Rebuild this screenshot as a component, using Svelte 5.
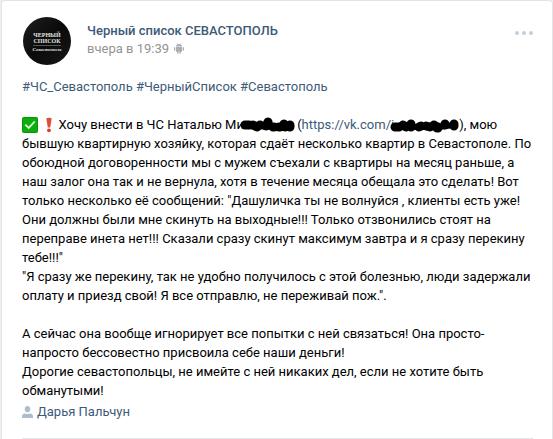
<script>
	const author = 'Дарья Пальчун';
	const tags = ['#ЧС_Севастополь', '#ЧерныйСписок', '#Севастополь'];
</script>

<article class="post">
	<header class="header">
		<a class="avatar" href="#group" aria-label="Черный список">
			<svg width="50" height="50" viewBox="0 0 50 50">
				<defs>
					<linearGradient id="dark" x1="0" y1="0" x2="1" y2="1">
						<stop offset="0" stop-color="#202020" />
						<stop offset="0.5" stop-color="#0a0a0a" />
						<stop offset="1" stop-color="#181818" />
					</linearGradient>
				</defs>
				<circle cx="25" cy="25" r="24" fill="url(#dark)" />
				<g fill="#e4e4e4" text-anchor="middle" font-family="Liberation Serif, serif" font-weight="bold">
					<text x="25" y="21" font-size="6">ЧЕРНЫЙ</text>
					<text x="25" y="27" font-size="6">СПИСОК</text>
					<text x="25" y="35" font-size="5" font-style="italic">Севастополь</text>
				</g>
				<path d="M11 29.5h28" stroke="#777" stroke-width="0.7" />
			</svg>
		</a>
		<div class="info">
			<a class="name" href="#group">Черный список СЕВАСТОПОЛЬ</a>
			<div class="date">
				<a href="#post">вчера в 19:39</a>
				<svg width="10" height="11" viewBox="0 0 10 11" fill="#a9adb2">
					<path d="M2 3.6a3 2.6 0 0 1 6 0zM2 4.1h6v4.2q0 .5-.5.5h-5q-.5 0-.5-.5z" />
					<path d="M3.2 8h1.3v2.8H3.2zM5.5 8h1.3v2.8H5.5zM0 4.2h1.3v3.4H0zM8.7 4.2H10v3.4H8.7z" />
					<path d="M3 .3l.8 1.3M7 .3l-.8 1.3" stroke="#a9adb2" stroke-width="0.5" />
				</svg>
			</div>
		</div>
		<button class="menu" aria-label="Действия">
			<svg width="18" height="4" viewBox="0 0 18 4" fill="#c5d0db">
				<circle cx="2" cy="2" r="2" />
				<circle cx="9" cy="2" r="2" />
				<circle cx="16" cy="2" r="2" />
			</svg>
		</button>
	</header>

	<div class="text">
		<p>
			{#each tags as tag}
				<a href="#tag">{tag}</a>{' '}
			{/each}
		</p>
		<p>
			<svg class="emoji" width="16" height="16" viewBox="0 0 16 16">
				<rect x="0.5" y="0.5" width="15" height="15" rx="1" fill="#0bae0b" stroke="#079307" />
				<path d="M3.3 7.7l3.4 3.2 6-6.4" fill="none" stroke="#e4f8df" stroke-width="1.8" />
			</svg>
			<svg class="emoji" width="14" height="16" viewBox="0 0 14 16">
				<path d="M5.3 1.2q2.7-1 5.4 0L9.2 10.5H6.8z" fill="#e24b38" />
				<circle cx="8" cy="13.3" r="1.9" fill="#df3c2c" />
			</svg>
			Хочу внести в ЧС Наталью Ми<svg class="blot" width="50" height="13" viewBox="0 0 50 13">
				<path d="M1 6h4M9 6l4 2M16 6v0M22 7l2-4M29 8h1M35 8h1M40 5l1 3M46 6v2" />
				<path class="link" d="M2 7l45 1" />
			</svg>
			(<a href="#profile">https://vk.com/i<svg class="blot" width="65" height="13" viewBox="0 0 65 13">
				<path d="M1 8h4M9 6l3 2M17 5v3M25 8l2-1M32 7l4 1M40 6l3 3M44 8v1M51 5v1M60 5v2" />
				<path class="link" d="M2 8h15M17 8h8M25 8h19M44 8l16-2" />
			</svg></a>), мою бывшую квартирную хозяйку, которая сдаёт несколько квартир в Севастополе. По обоюдной
			договоренности мы с мужем съехали с квартиры на месяц раньше, а наш залог она так и не вернула, хотя в
			течение месяца обещала это сделать! Вот только несколько её сообщений: "Дашуличка ты не волнуйся , клиенты
			есть уже! Они должны были мне скинуть на выходные!!! Только отзвонились стоят на переправе инета нет!!!
			Сказали сразу скинут максимум завтра и я сразу перекину тебе!!!"<br />
			"Я сразу же перекину, так не удобно получилось с этой болезнью, люди задержали оплату и приезд свой! Я все
			отправлю, не переживай пож.".
		</p>
		<p>
			А сейчас она вообще игнорирует все попытки с ней связаться! Она просто-напросто бессовестно присвоила себе
			наши деньги!<br />
			Дорогие севастопольцы, не имейте с ней никаких дел, если не хотите быть обманутыми!
		</p>
	</div>

	<a class="author" href="#author">
		<svg width="11" height="12" viewBox="0 0 11 12" fill="#aebdcd">
			<ellipse cx="5.5" cy="3.2" rx="2.7" ry="3.1" />
			<path d="M0 12v-1.8Q0 8 3 7.5q2.5 1 5 0 3 .5 3 2.7V12z" />
		</svg>
		{author}
	</a>
	<hr />
</article>

<style>
	:global(body) {
		background: #edeef0;
	}

	.post {
		margin-left: 1px;
		padding: 15px 19px 0 20px;
		background: #fff;
		border: 1px solid #e2e4e7;
		border-bottom: 0;
		border-radius: 4px 4px 0 0;
		color: #000;
		font: 13px/19px Roboto, "Open Sans", sans-serif;
	}

	a {
		color: #3d5a78;
		text-decoration: none;
	}

	a:hover {
		text-decoration: underline;
	}

	.header {
		display: flex;
		align-items: flex-start;
	}

	.avatar svg {
		display: block;
	}

	.info {
		flex: 1;
		padding: 6px 0 0 15px;
	}

	.name {
		display: block;
		font-weight: 500;
		line-height: 18px;
	}

	.date {
		display: flex;
		align-items: center;
		gap: 5px;
		line-height: 17px;
	}

	.date a {
		color: #939393;
	}

	.menu {
		display: flex;
		margin: 9px 0 0;
		padding: 6px 0;
		background: none;
		border: 0;
		cursor: pointer;
	}

	.text {
		padding-top: 11px;
	}

	p {
		margin: 0 0 19px;
	}

	p:last-child {
		margin-bottom: 0;
	}

	.emoji {
		vertical-align: -4px;
	}

	.blot {
		overflow: visible;
		vertical-align: -3px;
		fill: none;
		stroke: #000;
		stroke-width: 9px;
		stroke-linecap: round;
		stroke-linejoin: round;
	}

	.link {
		stroke-width: 6px;
	}

	.author {
		display: flex;
		align-items: center;
		gap: 4px;
		margin-top: 2px;
	}

	hr {
		height: 1px;
		margin: 17px 0 0;
		background: #e4e6e9;
		border: 0;
	}
</style>
